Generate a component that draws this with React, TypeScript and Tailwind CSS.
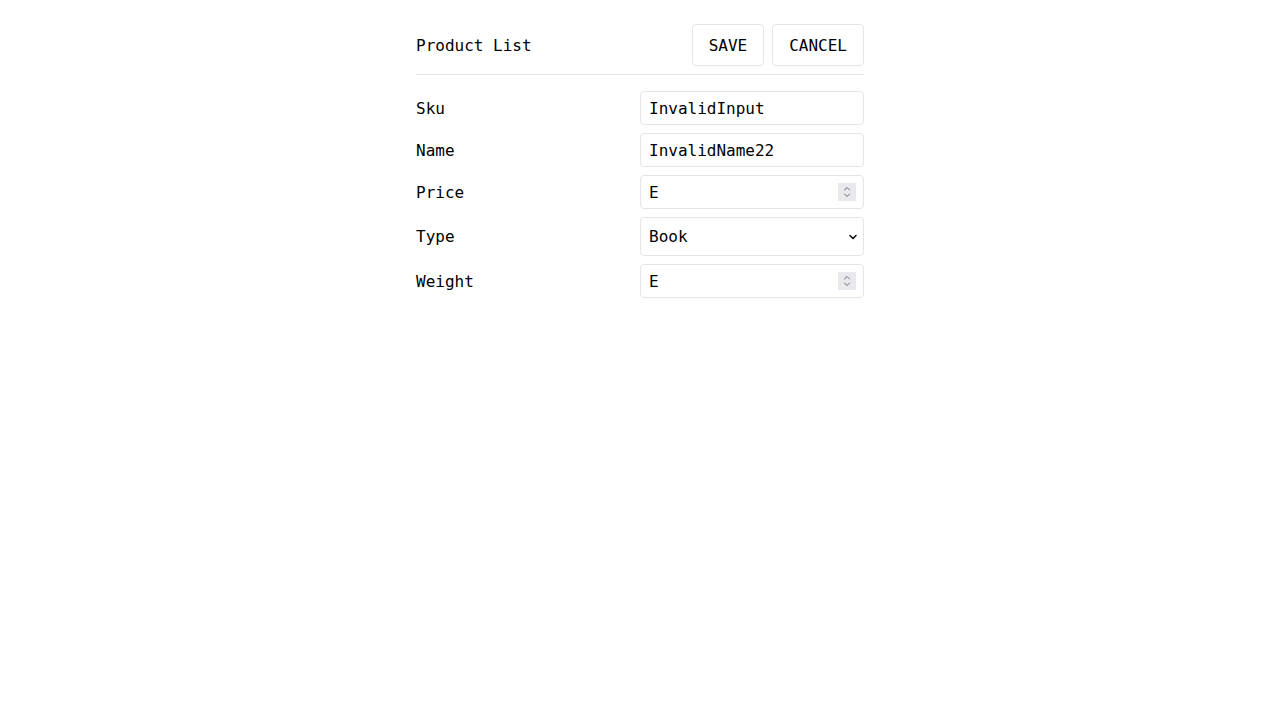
import React from 'react';

const mono = { fontFamily: '"DejaVu Sans Mono", "Liberation Mono", monospace' };

const Spinner: React.FC = () => (
  <div className="absolute right-[8px] top-1/2 -translate-y-1/2 w-[18px] h-[18px] bg-[#e9e9ed] flex items-center justify-center pointer-events-none">
    <svg width="10" height="14" viewBox="0 0 10 14" fill="none" stroke="#6b6b6b" strokeWidth="1" strokeLinecap="round" strokeLinejoin="round">
      <path d="M2.5 5 L5 2.5 L7.5 5" />
      <path d="M2.5 9 L5 11.5 L7.5 9" />
    </svg>
  </div>
);

const fields = [
  { label: 'Sku', value: 'InvalidInput', kind: 'text' },
  { label: 'Name', value: 'InvalidName22', kind: 'text' },
  { label: 'Price', value: 'E', kind: 'number' },
  { label: 'Type', value: 'Book', kind: 'select' },
  { label: 'Weight', value: 'E', kind: 'number' },
];

export default function App() {
  return (
    <div className="min-h-screen bg-white text-black" style={mono}>
      <div className="max-w-md mx-auto pt-6">
        {/* Header */}
        <div className="flex items-center justify-between pb-2 border-b border-[#e5e5e5]">
          <h1 className="text-base pt-[2px]">Product List</h1>
          <div className="flex gap-2">
            <button className="px-4 pt-[9px] pb-[7px] border border-[#e5e5e5] rounded text-base leading-6">SAVE</button>
            <button className="px-4 pt-[9px] pb-[7px] border border-[#e5e5e5] rounded text-base leading-6">CANCEL</button>
          </div>
        </div>

        {/* Form */}
        <form className="flex flex-col gap-2 mt-4">
          {fields.map((f) => (
            <div key={f.label} className="grid grid-cols-2 items-center">
              {f.kind === 'select' ? (
                <label className="text-base">{f.label}</label>
              ) : (
                <label className="text-base pt-[2px]">{f.label}</label>
              )}
              {f.kind === 'select' ? (
                <div className="relative">
                  <select
                    defaultValue={f.value}
                    className="w-full h-[39px] pl-2 pr-6 border border-[#e5e5e5] rounded bg-white text-base appearance-none"
                  >
                    <option>Book</option>
                    <option>DVD</option>
                    <option>Furniture</option>
                  </select>
                  <svg
                    className="absolute right-[6px] top-1/2 -translate-y-1/2 pointer-events-none"
                    width="10" height="10" viewBox="0 0 10 10" fill="none"
                    stroke="#111" strokeWidth="1.6" strokeLinecap="round" strokeLinejoin="round"
                  >
                    <path d="M2 3.5 L5 6.5 L8 3.5" />
                  </svg>
                </div>
              ) : (
                <div className="relative">
                  <input
                    type="text"
                    defaultValue={f.value}
                    className="w-full h-[34px] px-2 border border-[#e5e5e5] rounded text-base outline-none"
                  />
                  {f.kind === 'number' && <Spinner />}
                </div>
              )}
            </div>
          ))}
        </form>
      </div>
    </div>
  );
}
